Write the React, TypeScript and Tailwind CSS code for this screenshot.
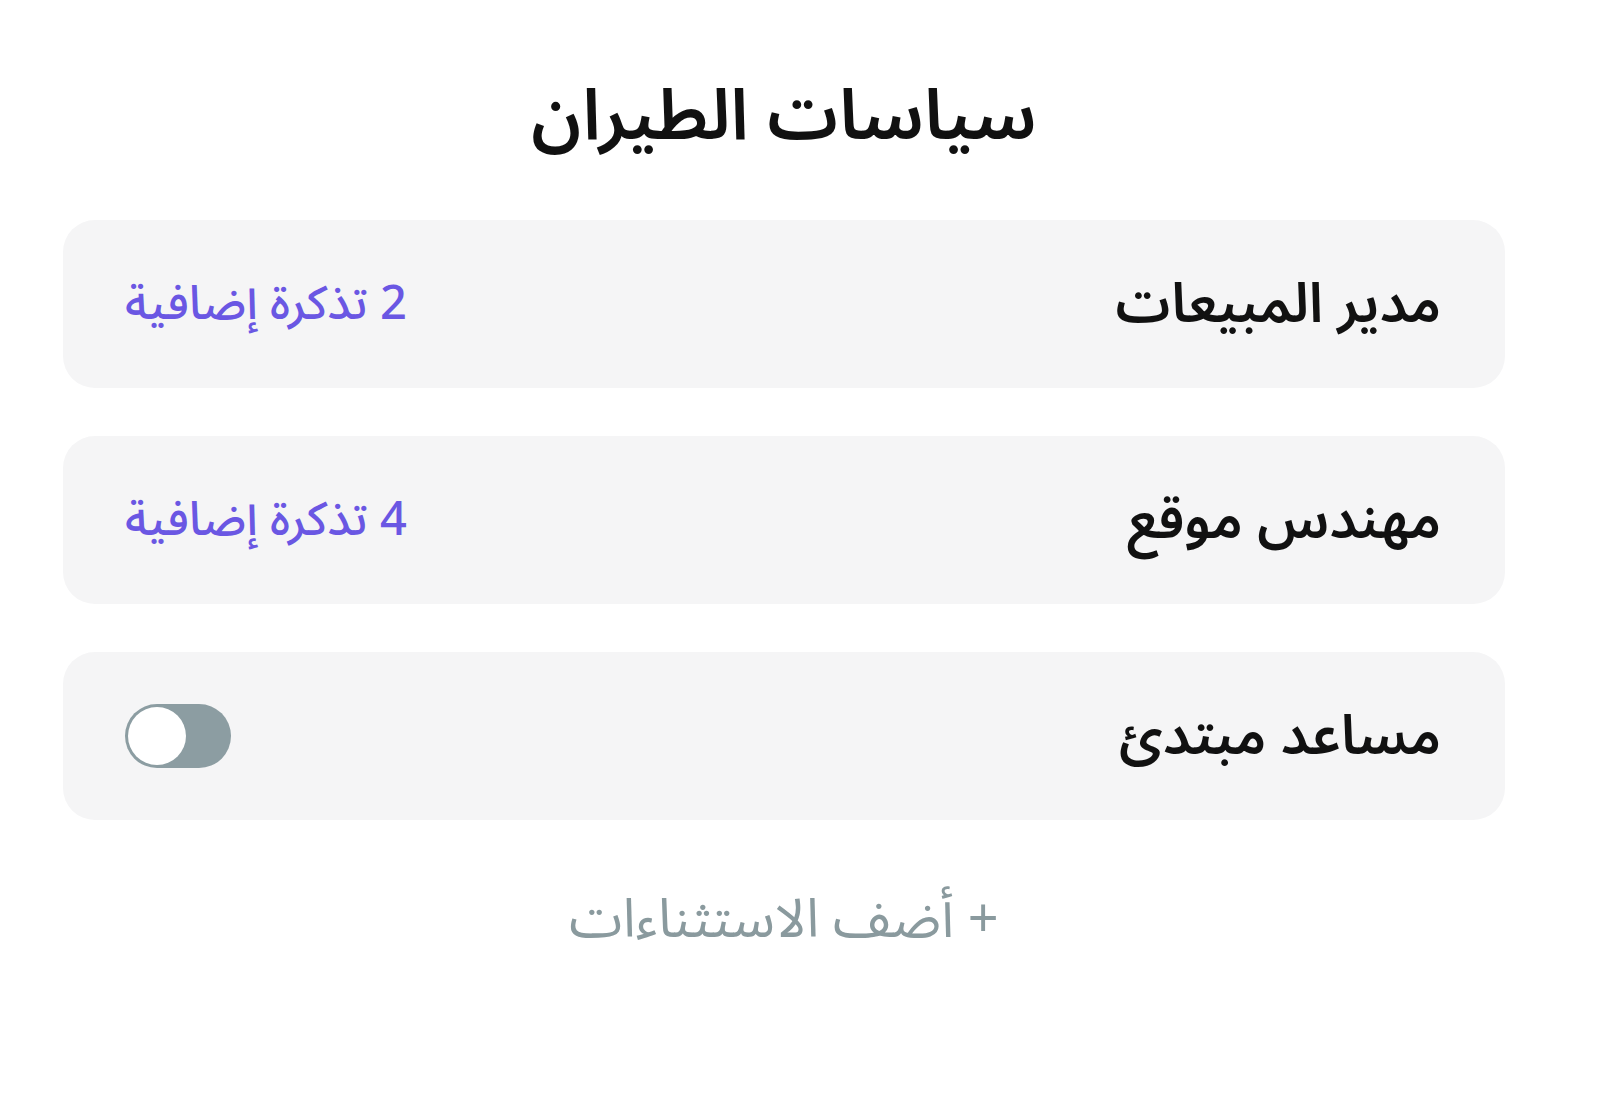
import React from "react";

const font = { fontFamily: '"Noto Sans Arabic", "Noto Sans", "DejaVu Sans", sans-serif' };

function Row({ label, children }: { label: string; children: React.ReactNode }) {
  return (
    <div dir="rtl" className="flex h-[168px] items-center justify-between rounded-[32px] bg-[#f5f5f6] pr-[64px] pl-[62px]">
      <div className="text-[55px] font-semibold text-[#111111] leading-none">{label}</div>
      <div>{children}</div>
    </div>
  );
}

export default function App() {
  return (
    <div className="min-h-[1120px] w-[1600px] bg-white" style={font}>
      <div className="ml-[63px] w-[1442px] flex flex-col">
        <h1 dir="rtl" className="mt-[70px] h-[92px] text-center text-[71px] font-semibold leading-none text-[#111111] flex items-center justify-center">
          سياسات الطيران
        </h1>
        <div className="mt-[58px] flex flex-col gap-[48px]">
          <Row label="مدير المبيعات">
            <span className="text-[47px] font-medium text-[#6a57e3]">2 تذكرة إضافية</span>
          </Row>
          <Row label="مهندس موقع">
            <span className="text-[47px] font-medium text-[#6a57e3]">4 تذكرة إضافية</span>
          </Row>
          <Row label="مساعد مبتدئ">
            <div dir="ltr" className="flex h-[64px] w-[106px] items-center rounded-full bg-[#8c9da2] p-[3px]">
              <div className="h-[58px] w-[58px] rounded-full bg-white" />
            </div>
          </Row>
        </div>
        <div dir="rtl" className="mt-[60px] text-center text-[54px] text-[#8a9a9e]">
          + أضف الاستثناءات
        </div>
      </div>
    </div>
  );
}
